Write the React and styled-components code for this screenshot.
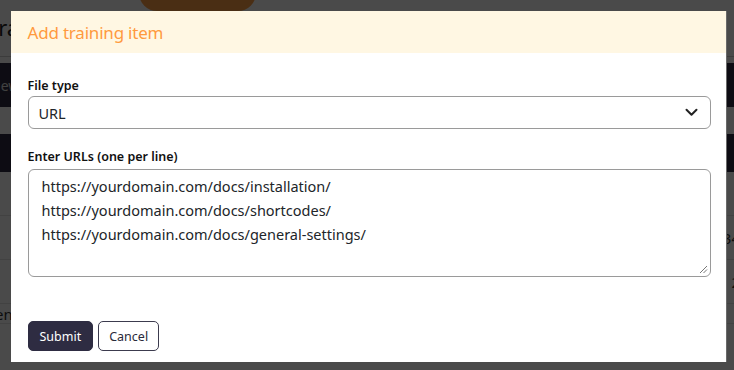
import React from "react";
import styled, { createGlobalStyle } from "styled-components";

const Global = createGlobalStyle`
  html, body { margin: 0; padding: 0; }
  body {
    width: 734px; height: 370px; overflow: hidden;
    background: #ffffff;
    font-family: "Noto Sans", "Open Sans", sans-serif;
    color: #212529;
  }
  * { box-sizing: border-box; }
`;

/* ---------- background page ---------- */
const Page = styled.div`
  width: 734px;
  height: 370px;
  display: flex;
  flex-direction: column;
  overflow: hidden;
`;

const PageHeader = styled.div`
  height: 57px;
  display: flex;
  align-items: flex-start;
  gap: 60px;
  border-bottom: 1px solid #d0d0d0;
`;

const PageTitle = styled.h1`
  margin: 12px 0 0 -13px;
  font-size: 22px;
  font-weight: 400;
  color: #222;
`;

const OrangeButton = styled.div`
  width: 117px;
  height: 42px;
  margin-top: -31px;
  margin-left: 8px;
  background: #ff9f45;
  border-radius: 18px;
`;

const TabBar = styled.div`
  margin-top: 6px;
  height: 44px;
  background: #2d2b41;
  color: #e0e0e0;
  display: flex;
  align-items: center;
  font-size: 14px;
`;

const Spacer = styled.div`
  height: ${(p) => p.$h}px;
`;

const TableHead = styled.div`
  height: 38px;
  background: #2d2b41;
`;

const Row = styled.div`
  height: ${(p) => p.$h || 44}px;
  border-bottom: 1px solid #e2e2e2;
  display: flex;
  align-items: center;
  justify-content: space-between;
  font-size: 15px;
  color: #333;
`;

const Cell = styled.span`
  margin: ${(p) => p.$m};
`;

/* ---------- modal ---------- */
const Backdrop = styled.div`
  position: fixed;
  inset: 0;
  background: rgba(0, 0, 0, 0.71);
  display: flex;
  justify-content: center;
  padding-top: 11px;
`;

const Dialog = styled.div`
  width: 716px;
  height: 351px;
  margin-left: 3px;
  background: #fff;
  display: flex;
  flex-direction: column;
  border-right: 1px solid #6a6a6a;
`;

const Header = styled.div`
  height: 42px;
  background: #fff7e3;
  display: flex;
  align-items: center;
  padding-left: 17px;
`;

const Title = styled.h5`
  margin: 0;
  font-size: 17px;
  font-weight: 400;
  color: #ff9a3e;
  letter-spacing: -0.2px;
`;

const Body = styled.div`
  padding: 25px 15px 0 17px;
  display: flex;
  flex-direction: column;
`;

const Field = styled.div`
  display: flex;
  flex-direction: column;
  margin-bottom: ${(p) => p.$mb}px;
`;

const Label = styled.label`
  font-size: 12.5px;
  font-weight: 600;
  color: #111;
  margin-bottom: ${(p) => p.$mb}px;
  line-height: 16px;
`;

const SelectBox = styled.div`
  height: 33px;
  border: 1px solid #9a9a9a;
  border-radius: 6px;
  display: flex;
  align-items: center;
  justify-content: space-between;
  padding: 0 12px 0 10px;
  font-size: 14.5px;
  color: #212529;
`;

const TextArea = styled.div`
  position: relative;
  height: 108px;
  border: 1px solid #9a9a9a;
  border-radius: 6px;
  padding: 4px 13px;
  font-size: 14.5px;
  line-height: 24px;
  color: #212529;
  white-space: pre;
`;

const Grip = styled.svg`
  position: absolute;
  right: 2px;
  bottom: 2px;
`;

const Actions = styled.div`
  margin-top: 44px;
  display: flex;
  gap: 5px;
`;

const Button = styled.button`
  height: 30px;
  padding: 0 ${(p) => (p.$primary ? 11 : 10)}px;
  border-radius: 5px;
  font-family: inherit;
  font-size: 12.5px;
  border: 1px solid ${(p) => (p.$primary ? "#2e2c42" : "#3c3b4e")};
  background: ${(p) => (p.$primary ? "#2e2c42" : "#fff")};
  color: ${(p) => (p.$primary ? "#fff" : "#2a2a3a")};
`;

export default function App() {
  return (
    <>
      <Global />
      <Page>
        <PageHeader>
          <PageTitle>Training</PageTitle>
          <OrangeButton />
        </PageHeader>
        <TabBar>
          <Cell $m="0 0 0 -10px">New</Cell>
        </TabBar>
        <Spacer $h={27} />
        <TableHead />
        <Row>
          <Cell $m="0 0 0 8px"> </Cell>
        </Row>
        <Row>
          <Cell $m="0 0 0 8px"> </Cell>
          <Cell $m="0 -6px 0 0">34</Cell>
        </Row>
        <Row>
          <Cell $m="0 0 0 8px"> </Cell>
          <Cell $m="0 -6px 0 0">2</Cell>
        </Row>
        <Row $h={20}>
          <Cell $m="0 0 0 -14px">Pending</Cell>
        </Row>
      </Page>
      <Backdrop>
        <Dialog>
          <Header>
            <Title>Add training item</Title>
          </Header>
          <Body>
            <Field $mb={20}>
              <Label $mb={2}>File type</Label>
              <SelectBox>
                <span>URL</span>
                <svg width="13" height="9" viewBox="0 0 13 9" fill="none">
                  <path d="M1.5 1.8 L6.5 6.8 L11.5 1.8" stroke="#222" strokeWidth="2" strokeLinecap="round" strokeLinejoin="round" />
                </svg>
              </SelectBox>
            </Field>
            <Field $mb={0}>
              <Label $mb={4}>Enter URLs (one per line)</Label>
              <TextArea>
                {"https://yourdomain.com/docs/installation/\nhttps://yourdomain.com/docs/shortcodes/\nhttps://yourdomain.com/docs/general-settings/"}
                <Grip width="9" height="9" viewBox="0 0 9 9">
                  <path d="M8 1 L1 8 M8 4.5 L4.5 8" stroke="#777" strokeWidth="1" />
                </Grip>
              </TextArea>
            </Field>
            <Actions>
              <Button $primary>Submit</Button>
              <Button>Cancel</Button>
            </Actions>
          </Body>
        </Dialog>
      </Backdrop>
    </>
  );
}
